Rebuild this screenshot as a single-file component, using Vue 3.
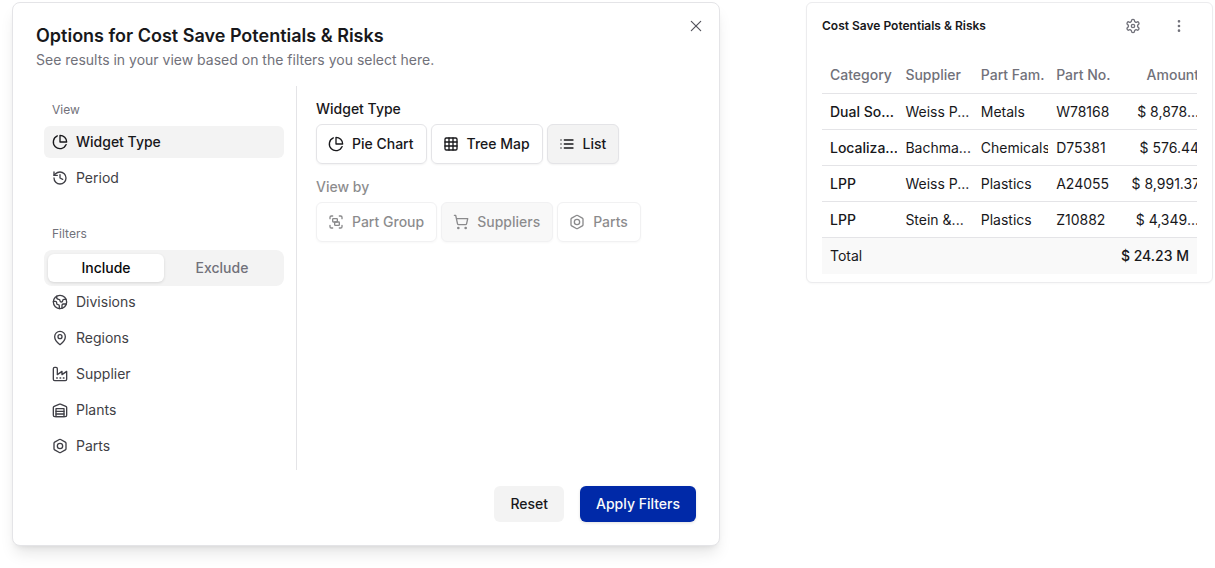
<script setup>
import { ref, h } from 'vue'

const shapes = {
  pie: '<path d="M21.21 15.89A10 10 0 1 1 8 2.83"/><path d="M22 12A10 10 0 0 0 12 2v10z"/>',
  history: '<path d="M3 12a9 9 0 1 0 9-9 9.75 9.75 0 0 0-6.74 2.74L3 8"/><path d="M3 3v5h5"/><path d="M12 7v5l4 2"/>',
  earth: '<path d="M21.54 15H17a2 2 0 0 0-2 2v4.54"/><path d="M7 3.34V5a3 3 0 0 0 3 3a2 2 0 0 1 2 2c0 1.1.9 2 2 2a2 2 0 0 0 2-2c0-1.1.9-2 2-2h3.17"/><path d="M11 21.95V18a2 2 0 0 0-2-2a2 2 0 0 1-2-2v-1a2 2 0 0 0-2-2H2.05"/><circle cx="12" cy="12" r="10"/>',
  pin: '<path d="M20 10c0 6-8 12-8 12s-8-6-8-12a8 8 0 0 1 16 0Z"/><circle cx="12" cy="10" r="3"/>',
  factory: '<path d="M2 20a2 2 0 0 0 2 2h16a2 2 0 0 0 2-2V8l-7 5V8l-7 5V4a2 2 0 0 0-2-2H4a2 2 0 0 0-2 2Z"/><path d="M17 18h1"/><path d="M12 18h1"/><path d="M7 18h1"/>',
  warehouse: '<path d="M22 8.35V20a2 2 0 0 1-2 2H4a2 2 0 0 1-2-2V8.35A2 2 0 0 1 3.26 6.5l8-3.2a2 2 0 0 1 1.48 0l8 3.2A2 2 0 0 1 22 8.35Z"/><path d="M6 18h12"/><path d="M6 14h12"/><rect width="12" height="12" x="6" y="10"/>',
  bolt: '<path d="M21 16V8a2 2 0 0 0-1-1.73l-7-4a2 2 0 0 0-2 0l-7 4A2 2 0 0 0 3 8v8a2 2 0 0 0 1 1.73l7 4a2 2 0 0 0 2 0l7-4A2 2 0 0 0 21 16z"/><circle cx="12" cy="12" r="4"/>',
  grid: '<rect width="18" height="18" x="3" y="3" rx="2"/><path d="M3 9h18"/><path d="M3 15h18"/><path d="M9 3v18"/><path d="M15 3v18"/>',
  list: '<path d="M8 6h13"/><path d="M8 12h13"/><path d="M8 18h13"/><path d="M3 6h.01"/><path d="M3 12h.01"/><path d="M3 18h.01"/>',
  group: '<path d="M3 7V5c0-1.1.9-2 2-2h2"/><path d="M17 3h2c1.1 0 2 .9 2 2v2"/><path d="M21 17v2c0 1.1-.9 2-2 2h-2"/><path d="M7 21H5c-1.1 0-2-.9-2-2v-2"/><rect width="7" height="5" x="7" y="7" rx="1"/><rect width="7" height="5" x="10" y="12" rx="1"/>',
  cart: '<circle cx="8" cy="21" r="1"/><circle cx="19" cy="21" r="1"/><path d="M2.05 2.05h2l2.66 12.42a2 2 0 0 0 2 1.58h9.78a2 2 0 0 0 1.95-1.57l1.65-7.43H5.12"/>',
  close: '<path d="M19 5 5 19"/><path d="m5 5 14 14"/>',
  settings: '<path d="M12.22 2h-.44a2 2 0 0 0-2 2v.18a2 2 0 0 1-1 1.73l-.43.25a2 2 0 0 1-2 0l-.15-.08a2 2 0 0 0-2.73.73l-.22.38a2 2 0 0 0 .73 2.73l.15.1a2 2 0 0 1 1 1.72v.51a2 2 0 0 1-1 1.74l-.15.09a2 2 0 0 0-.73 2.73l.22.38a2 2 0 0 0 2.73.73l.15-.08a2 2 0 0 1 2 0l.43.25a2 2 0 0 1 1 1.73V20a2 2 0 0 0 2 2h.44a2 2 0 0 0 2-2v-.18a2 2 0 0 1 1-1.73l.43-.25a2 2 0 0 1 2 0l.15.08a2 2 0 0 0 2.73-.73l.22-.39a2 2 0 0 0-.73-2.73l-.15-.08a2 2 0 0 1-1-1.74v-.5a2 2 0 0 1 1-1.74l.15-.09a2 2 0 0 0 .73-2.73l-.22-.38a2 2 0 0 0-2.73-.73l-.15.08a2 2 0 0 1-2 0l-.43-.25a2 2 0 0 1-1-1.73V4a2 2 0 0 0-2-2z"/><circle cx="12" cy="12" r="2.5"/>',
  dots: '<circle cx="12" cy="12" r="1"/><circle cx="12" cy="5" r="1"/><circle cx="12" cy="19" r="1"/>',
}

const Icon = (props) =>
  h('svg', {
    width: 16,
    height: 16,
    viewBox: '0 0 24 24',
    fill: 'none',
    stroke: 'currentColor',
    'stroke-width': 2,
    'stroke-linecap': 'round',
    'stroke-linejoin': 'round',
    'aria-hidden': 'true',
    innerHTML: shapes[props.name],
  })
Icon.props = ['name']

const section = ref('Widget Type')
const mode = ref('Include')
const widget = ref('List')

const views = [
  { label: 'Widget Type', icon: 'pie' },
  { label: 'Period', icon: 'history' },
]
const filters = [
  { label: 'Divisions', icon: 'earth' },
  { label: 'Regions', icon: 'pin' },
  { label: 'Supplier', icon: 'factory' },
  { label: 'Plants', icon: 'warehouse' },
  { label: 'Parts', icon: 'bolt' },
]
const widgets = [
  { label: 'Pie Chart', icon: 'pie' },
  { label: 'Tree Map', icon: 'grid' },
  { label: 'List', icon: 'list' },
]
const groupings = [
  { label: 'Part Group', icon: 'group' },
  { label: 'Suppliers', icon: 'cart' },
  { label: 'Parts', icon: 'bolt' },
]
const columns = ['Category', 'Supplier', 'Part Fam.', 'Part No.', 'Amount']
const rows = [
  ['Dual So...', 'Weiss P...', 'Metals', 'W78168', '$ 8,878...'],
  ['Localiza...', 'Bachma...', 'Chemicals', 'D75381', '$ 576.44'],
  ['LPP', 'Weiss P...', 'Plastics', 'A24055', '$ 8,991.37'],
  ['LPP', 'Stein &...', 'Plastics', 'Z10882', '$ 4,349...'],
]
</script>

<template>
  <main class="page">
    <section class="dialog" role="dialog" aria-labelledby="dialog-title">
      <header class="dialog-head">
        <div>
          <h1 id="dialog-title">Options for Cost Save Potentials &amp; Risks</h1>
          <p>See results in your view based on the filters you select here.</p>
        </div>
        <button class="close" aria-label="Close"><Icon name="close" /></button>
      </header>

      <div class="body">
        <nav class="sidebar">
          <h2>View</h2>
          <div class="items">
            <button
              v-for="item in views"
              :key="item.label"
              class="item"
              :class="{ active: section === item.label }"
              @click="section = item.label"
            >
              <Icon :name="item.icon" />{{ item.label }}
            </button>
          </div>
          <h2 class="filters-title">Filters</h2>
          <div class="tabs">
            <button
              v-for="tab in ['Include', 'Exclude']"
              :key="tab"
              class="tab"
              :class="{ active: mode === tab }"
              @click="mode = tab"
            >{{ tab }}</button>
          </div>
          <div class="items">
            <button
              v-for="item in filters"
              :key="item.label"
              class="item"
              :class="{ active: section === item.label }"
              @click="section = item.label"
            >
              <Icon :name="item.icon" />{{ item.label }}
            </button>
          </div>
        </nav>

        <div class="options">
          <h3>Widget Type</h3>
          <div class="choices">
            <button
              v-for="w in widgets"
              :key="w.label"
              class="choice"
              :class="{ active: widget === w.label }"
              @click="widget = w.label"
            >
              <Icon :name="w.icon" />{{ w.label }}
            </button>
          </div>
          <div class="disabled">
            <h3>View by</h3>
            <div class="choices">
              <button
                v-for="g in groupings"
                :key="g.label"
                class="choice"
                :class="{ active: g.label === 'Suppliers' }"
                disabled
              >
                <Icon :name="g.icon" />{{ g.label }}
              </button>
            </div>
          </div>
        </div>
      </div>

      <footer class="actions">
        <button class="action">Reset</button>
        <button class="action primary">Apply Filters</button>
      </footer>
    </section>

    <section class="card">
      <header class="card-head">
        <h2>Cost Save Potentials &amp; Risks</h2>
        <button class="tool" aria-label="Settings"><Icon name="settings" /></button>
        <button class="tool" aria-label="More"><Icon name="dots" /></button>
      </header>
      <div class="table-wrap">
        <table>
          <thead>
            <tr><th v-for="c in columns" :key="c" scope="col">{{ c }}</th></tr>
          </thead>
          <tbody>
            <tr v-for="(row, r) in rows" :key="r">
              <td v-for="(cell, c) in row" :key="c">{{ cell }}</td>
            </tr>
          </tbody>
          <tfoot>
            <tr>
              <td colspan="3">Total</td>
              <td colspan="2" class="sum">$ 24.23 M</td>
            </tr>
          </tfoot>
        </table>
      </div>
    </section>
  </main>
</template>

<style>
body {
  background: #fff;
}
</style>

<style scoped>
* {
  box-sizing: border-box;
}
.page {
  display: flex;
  align-items: flex-start;
  gap: 86px;
  padding: 2px 2px 22px 12px;
  font-family: Inter, "Liberation Sans", sans-serif;
  font-size: 14px;
  line-height: 20px;
  color: #18181b;
}
h1, h2, h3, p {
  margin: 0;
}
button {
  margin: 0;
  padding: 0;
  border: 0;
  background: none;
  color: inherit;
  font: inherit;
}
svg {
  flex: none;
  display: block;
}
.dialog {
  flex: 1 1 708px;
  min-width: 0;
  padding: 19px 23px 23px;
  border: 1px solid #e4e4e7;
  border-radius: 8px;
  background: #fff;
  box-shadow: 0 10px 15px -3px rgba(0, 0, 0, 0.1), 0 4px 6px -4px rgba(0, 0, 0, 0.1);
}
.dialog-head {
  display: flex;
  justify-content: space-between;
  align-items: flex-start;
  margin-bottom: 16px;
}
.dialog-head h1 {
  font-size: 18px;
  line-height: 28px;
  font-weight: 600;
}
.dialog-head p {
  color: #71717a;
}
.close {
  margin: -4px -8px 0 0;
  color: #52525b;
}
.close svg {
  stroke-width: 1.75;
}
.body {
  display: flex;
}
.sidebar {
  flex: none;
  width: 261px;
  padding: 14px 12px 8px 8px;
  border-right: 1px solid #e4e4e7;
}
.sidebar h2 {
  padding: 0 8px;
  margin-bottom: 6px;
  font-size: 12px;
  font-weight: 400;
  color: #71717a;
}
.sidebar .filters-title {
  margin-top: 30px;
}
.items {
  display: flex;
  flex-direction: column;
  gap: 4px;
}
.item {
  display: flex;
  align-items: center;
  gap: 8px;
  height: 32px;
  padding: 0 8px;
  border-radius: 6px;
  color: #3f3f46;
}
.item.active {
  background: #f3f3f3;
  color: #18181b;
  font-weight: 500;
}
.tabs {
  display: flex;
  height: 36px;
  padding: 4px;
  border-radius: 8px;
  background: #f3f3f3;
}
.tab {
  flex: 1;
  border-radius: 6px;
  font-weight: 500;
  color: #71717a;
}
.tab.active {
  background: #fff;
  color: #09090b;
  box-shadow: 0 1px 3px rgba(0, 0, 0, 0.12);
}
.options {
  flex: 1;
  min-width: 0;
  padding: 13px 0 0 19px;
}
.options h3 {
  margin-bottom: 5px;
  font-size: 14px;
  font-weight: 500;
}
.choices {
  display: flex;
  gap: 4px;
}
.choice {
  display: flex;
  align-items: center;
  gap: 8px;
  height: 40px;
  padding: 0 12px 0 11px;
  border: 1px solid #e4e4e7;
  border-radius: 6px;
  font-weight: 500;
  white-space: nowrap;
  box-shadow: 0 1px 2px rgba(0, 0, 0, 0.05);
}
.choice.active {
  background: #f3f3f3;
}
.disabled {
  margin-top: 13px;
  opacity: 0.5;
}
.actions {
  display: flex;
  justify-content: flex-end;
  gap: 16px;
  margin-top: 16px;
}
.action {
  height: 36px;
  padding: 0 16px;
  border-radius: 6px;
  background: #f3f3f3;
  font-weight: 500;
}
.action.primary {
  background: #0029a8;
  color: #fafafa;
  box-shadow: 0 1px 3px rgba(0, 0, 0, 0.12);
}
.card {
  flex: 1 1 407px;
  min-width: 0;
  padding: 5px 15px 8px;
  border: 1px solid #ececee;
  border-radius: 6px;
  background: #fff;
  box-shadow: 0 1px 2px rgba(0, 0, 0, 0.03);
}
.card-head {
  display: flex;
  align-items: center;
  gap: 10px;
  height: 36px;
  margin-bottom: 12px;
}
.card-head h2 {
  flex: 1;
  font-size: 12px;
  font-weight: 600;
}
.tool {
  display: grid;
  place-items: center;
  width: 36px;
  height: 36px;
  color: #71717a;
}
.table-wrap {
  overflow: hidden;
}
table {
  width: calc(100% + 2px);
  table-layout: fixed;
  border-collapse: separate;
  border-spacing: 0;
}
th, td {
  height: 36px;
  padding: 0 0 0 8px;
  overflow: hidden;
  border-bottom: 1px solid #e4e4e7;
  white-space: nowrap;
  text-align: left;
  font-weight: 400;
}
th {
  height: 38px;
  font-weight: 500;
  color: #71717a;
}
td:first-child {
  font-weight: 500;
}
th:last-child, td:last-child {
  text-align: right;
}
tfoot td {
  border: 0;
  background: #f9f9f9;
}
tfoot td:first-child {
  font-weight: 400;
}
td.sum {
  padding-right: 10px;
  font-weight: 500;
}
</style>
